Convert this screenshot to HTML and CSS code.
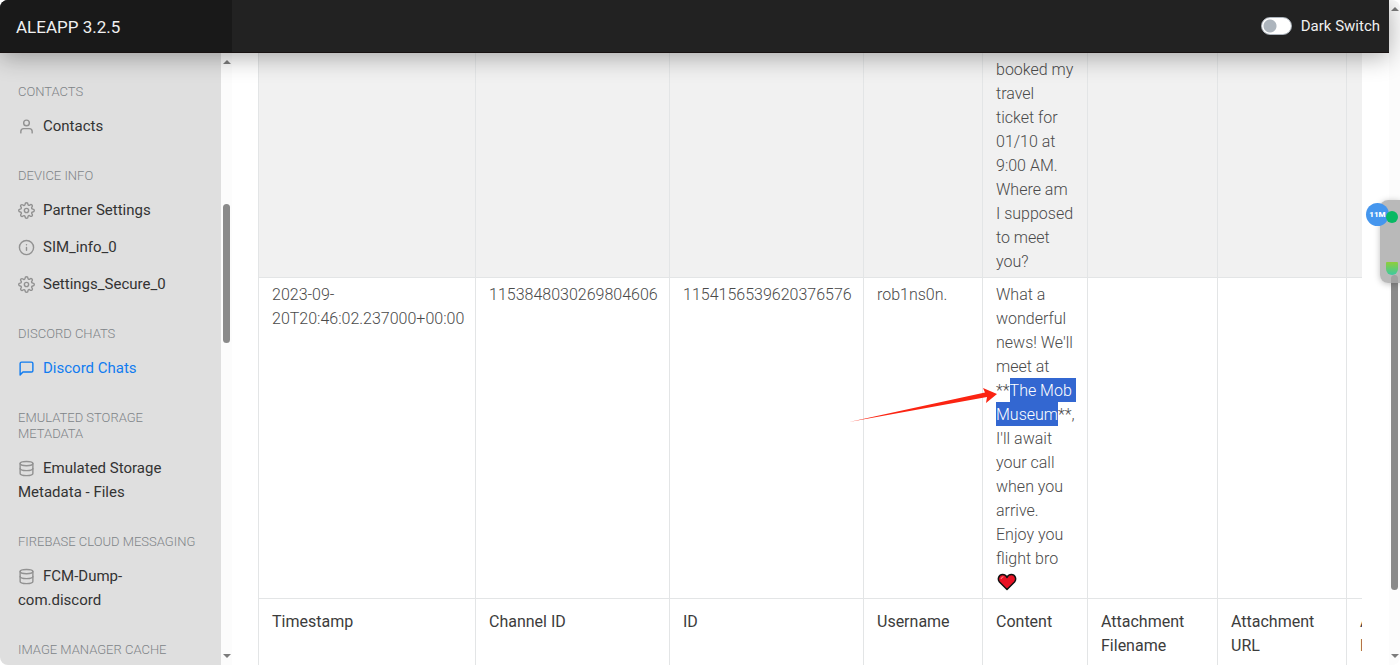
FILE: index.html
```
<!DOCTYPE html>
<html lang="en">
<head>
<meta charset="utf-8">
<title>ALEAPP 3.2.5</title>
<link rel="stylesheet" href="styles.css">
</head>
<body>
<svg class="defs" aria-hidden="true">
  <symbol id="user" viewBox="0 0 24 24"><path d="M20 21v-2a4 4 0 0 0-4-4H8a4 4 0 0 0-4 4v2"/><circle cx="12" cy="7" r="4"/></symbol>
  <symbol id="info" viewBox="0 0 24 24"><circle cx="12" cy="12" r="10"/><path d="M12 16v-4M12 8h.01"/></symbol>
  <symbol id="message" viewBox="0 0 24 24"><path d="M21 15a2 2 0 0 1-2 2H7l-4 4V5a2 2 0 0 1 2-2h14a2 2 0 0 1 2 2z"/></symbol>
  <symbol id="database" viewBox="0 0 24 24"><ellipse cx="12" cy="5" rx="9" ry="3"/><path d="M21 12c0 1.66-4 3-9 3s-9-1.34-9-3"/><path d="M3 5v14c0 1.66 4 3 9 3s9-1.34 9-3V5"/></symbol>
  <symbol id="settings" viewBox="0 0 24 24"><circle cx="12" cy="12" r="3"/><path d="M19.4 15a1.65 1.65 0 0 0 .33 1.82l.06.06a2 2 0 0 1 0 2.83 2 2 0 0 1-2.83 0l-.06-.06a1.65 1.65 0 0 0-1.82-.33 1.65 1.65 0 0 0-1 1.51V21a2 2 0 0 1-2 2 2 2 0 0 1-2-2v-.09A1.65 1.65 0 0 0 9 19.4a1.65 1.65 0 0 0-1.82.33l-.06.06a2 2 0 0 1-2.83 0 2 2 0 0 1 0-2.83l.06-.06a1.65 1.65 0 0 0 .33-1.82 1.65 1.65 0 0 0-1.51-1H3a2 2 0 0 1-2-2 2 2 0 0 1 2-2h.09A1.65 1.65 0 0 0 4.6 9a1.65 1.65 0 0 0-.33-1.82l-.06-.06a2 2 0 0 1 0-2.83 2 2 0 0 1 2.83 0l.06.06a1.65 1.65 0 0 0 1.82.33H9a1.65 1.65 0 0 0 1-1.51V3a2 2 0 0 1 2-2 2 2 0 0 1 2 2v.09a1.65 1.65 0 0 0 1 1.51 1.65 1.65 0 0 0 1.82-.33l.06-.06a2 2 0 0 1 2.83 0 2 2 0 0 1 0 2.83l-.06.06a1.65 1.65 0 0 0-.33 1.82V9a1.65 1.65 0 0 0 1.51 1H21a2 2 0 0 1 2 2 2 2 0 0 1-2 2h-.09a1.65 1.65 0 0 0-1.51 1z"/></symbol>
</svg>
<div class="window">
  <div class="page">
    <header class="navbar">
      <a class="brand" href="#">ALEAPP 3.2.5</a>
      <label class="dark-switch"><input type="checkbox" class="switch">Dark Switch</label>
    </header>
    <div class="body">
      <nav class="sidebar">
        <h6>Contacts</h6>
        <a href="#"><svg><use href="#user"/></svg>Contacts</a>
        <h6>Device Info</h6>
        <a href="#"><svg><use href="#settings"/></svg>Partner Settings</a>
        <a href="#"><svg><use href="#info"/></svg>SIM_info_0</a>
        <a href="#"><svg><use href="#settings"/></svg>Settings_Secure_0</a>
        <h6>Discord Chats</h6>
        <a href="#" class="active"><svg><use href="#message"/></svg>Discord Chats</a>
        <h6>Emulated Storage Metadata</h6>
        <a href="#"><svg><use href="#database"/></svg>Emulated Storage Metadata - Files</a>
        <h6>Firebase Cloud Messaging</h6>
        <a href="#"><svg><use href="#database"/></svg>FCM-Dump-<br>com.discord</a>
        <h6>Image Manager Cache</h6>
      </nav>
      <div class="scrollbar scrollbar-side"><i class="up"></i><i class="thumb"></i><i class="down"></i></div>
      <main class="content">
        <div class="table-wrap">
          <table>
            <colgroup><col class="c-time"><col class="c-id"><col class="c-id"><col class="c-user"><col class="c-content"><col class="c-att"><col class="c-url"><col class="c-att"></colgroup>
            <tbody>
              <tr class="odd"><td></td><td></td><td></td><td></td>
                <td>booked my<br>travel<br>ticket for<br>01/10 at<br>9:00 AM.<br>Where am<br>I supposed<br>to meet<br>you?</td>
                <td></td><td></td><td></td></tr>
              <tr><td>2023-09-<br>20T20:46:02.237000+00:00</td><td>1153848030269804606</td><td>1154156539620376576</td><td>rob1ns0n.</td>
                <td>What a<br>wonderful<br>news! We'll<br>meet at<br><span class="anchor">**<svg class="arrow" viewBox="0 0 148 36"><path d="M0 35L136 5.500L134 1L148 7L137 16L138 10Z"/></svg></span><mark>The Mob&nbsp;</mark><br><mark>Museum</mark>**,<br>I'll await<br>your call<br>when you<br>arrive.<br>Enjoy you<br>flight bro<br><svg class="heart" viewBox="0 0 20 18"><path class="heart-body" d="M10 16.500L2.500 9C0 6 2 1.500 5.500 1.500C8 1.500 9.500 3 10 4.500C10.500 3 12 1.500 14.500 1.500C18 1.500 20 6 17.500 9Z"/><path class="heart-shine" d="M4 6Q4.500 3.800 6.500 3.800"/></svg></td>
                <td></td><td></td><td></td></tr>
            </tbody>
            <tfoot>
              <tr><th>Timestamp</th><th>Channel ID</th><th>ID</th><th>Username</th><th>Content</th><th>Attachment Filename</th><th>Attachment URL</th><th>Attachment Link</th></tr>
            </tfoot>
          </table>
        </div>
      </main>
    </div>
  </div>
  <div class="scrollbar scrollbar-page"><i class="up"></i><i class="thumb"></i><i class="down"></i></div>
  <div class="widget"><span class="widget-badge">11M</span><i class="widget-dot"></i><i class="widget-level"></i></div>
</div>
</body>
</html>
```
FILE: styles.css
```
* { box-sizing: border-box; }
body {
  margin: 0;
  background: #fff;
  color: #4a4a4a;
  font: 300 16px/24px Roboto, "Liberation Sans", sans-serif;
}
.defs { position: absolute; width: 0; height: 0; }
.window {
  position: relative;
  display: flex;
  height: 100vh;
  overflow: hidden;
  border-radius: 8px;
}
.page { flex: 1; min-width: 0; display: flex; flex-direction: column; }

.navbar {
  z-index: 2;
  flex: none;
  display: flex;
  align-items: stretch;
  justify-content: space-between;
  height: 53px;
  background: #222;
  border-bottom: 1px solid #181212;
  box-shadow: 0 4px 24px rgba(0, 0, 0, .32);
  color: #f0f0f0;
}
.brand {
  width: 232px;
  padding: 15px 16px 13px;
  background: #191919;
  color: #f0f0f0;
  font-size: 17px;
  font-weight: 400;
  text-decoration: none;
}
.dark-switch {
  display: flex;
  align-items: center;
  gap: 9px;
  padding-right: 9px;
  font-size: 15px;
  font-weight: 400;
}
.switch {
  appearance: none;
  width: 31px;
  height: 18px;
  margin: 0;
  border-radius: 9px;
  border: 1px solid #adb5bd;
  background: radial-gradient(circle at 8px 8px, #adb5bd 6px, #fff 7px);
}

.body { flex: 1; min-height: 0; display: flex; }
.sidebar {
  flex: none;
  width: 221px;
  padding: 8px 16px 0 18px;
  overflow: hidden;
  background: #dfdfdf;
}
.sidebar h6 {
  margin: 23px 0 8px;
  color: #808488;
  font-size: 13px;
  font-weight: 300;
  line-height: 16px;
  text-transform: uppercase;
}
.sidebar a {
  display: block;
  padding: 6px 0 7px;
  color: #333;
  font-size: 15px;
  font-weight: 400;
  text-decoration: none;
}
.sidebar svg {
  width: 17px;
  height: 17px;
  margin-right: 8px;
  vertical-align: -4px;
  fill: none;
  stroke: #929292;
  stroke-width: 2;
  stroke-linecap: round;
  stroke-linejoin: round;
}
.sidebar a.active { color: #117cf0; }
.sidebar a.active svg { stroke: #117cf0; }

.scrollbar {
  flex: none;
  display: grid;
  width: 11px;
  justify-items: center;
  padding: 7px 0;
  background: #fcfcfc;
}
.scrollbar-side { grid-template-rows: 5px 139fr 139fr 310fr 4px; }
.scrollbar-page { grid-template-rows: 5px 263fr 315fr 64fr 4px; }
.scrollbar .up { border: 4px solid transparent; border-top: 0; border-bottom-color: #7c7c7c; align-self: start; }
.scrollbar .down { grid-row: 5; border: 4px solid transparent; border-bottom: 0; border-top-color: #7c7c7c; }
.scrollbar .thumb { grid-row: 3; width: 7px; border-radius: 4px; background: #8a8a8a; }

.content { flex: 1; min-width: 0; padding: 0 27px 0 26px; }
.table-wrap { height: 100%; overflow: hidden; }
table {
  width: 1218px;
  table-layout: fixed;
  border-collapse: separate;
  border-spacing: 0;
}
.c-time { width: 217px; }
.c-id { width: 194px; }
.c-user { width: 119px; }
.c-content { width: 105px; }
.c-att { width: 130px; }
.c-url { width: 129px; }
td, th {
  padding: 5px 0 3px 13px;
  border-left: 1px solid #e3e5e6;
  border-bottom: 1px solid #e3e5e6;
  text-align: left;
  vertical-align: top;
}
td { white-space: nowrap; }
th { padding: 11px 13px; font-weight: 400; color: #3c3c3c; }
.odd td { background: #f1f1f1; }
mark { padding: 3px 0 2px; background: #3367d1; color: #fff; }

.anchor { position: relative; }
.arrow {
  position: absolute;
  right: 13px;
  top: 6px;
  width: 148px;
  height: 36px;
  fill: #fb2412;
}
.heart { width: 20px; height: 18px; margin-left: 1px; vertical-align: -3px; }
.heart-body { fill: #e81224; stroke: #111; stroke-width: 1.5; stroke-linejoin: round; }
.heart-shine { fill: none; stroke: #ff8c92; stroke-width: 1; }

.widget {
  position: absolute;
  z-index: 3;
  top: 200px;
  right: 0;
  width: 20px;
  height: 83px;
  border-radius: 8px 0 0 8px;
  background: rgba(168, 168, 168, .8);
  box-shadow: 0 1px 6px rgba(0, 0, 0, .25);
}
.widget-badge {
  position: absolute;
  top: 3px;
  left: -14px;
  width: 23px;
  height: 23px;
  border-radius: 50%;
  background: #4596ee;
  color: #fff;
  font-size: 8px;
  font-weight: 900;
  line-height: 23px;
  text-align: center;
}
.widget-dot {
  position: absolute;
  top: 11px;
  left: 6px;
  width: 12px;
  height: 12px;
  border-radius: 50%;
  background: #08b964;
}
.widget-level {
  position: absolute;
  top: 62px;
  left: 6px;
  width: 12px;
  height: 13px;
  border-radius: 1px 1px 6px 6px;
  background: linear-gradient(#8fce3b, #3ccaa0);
}
```
